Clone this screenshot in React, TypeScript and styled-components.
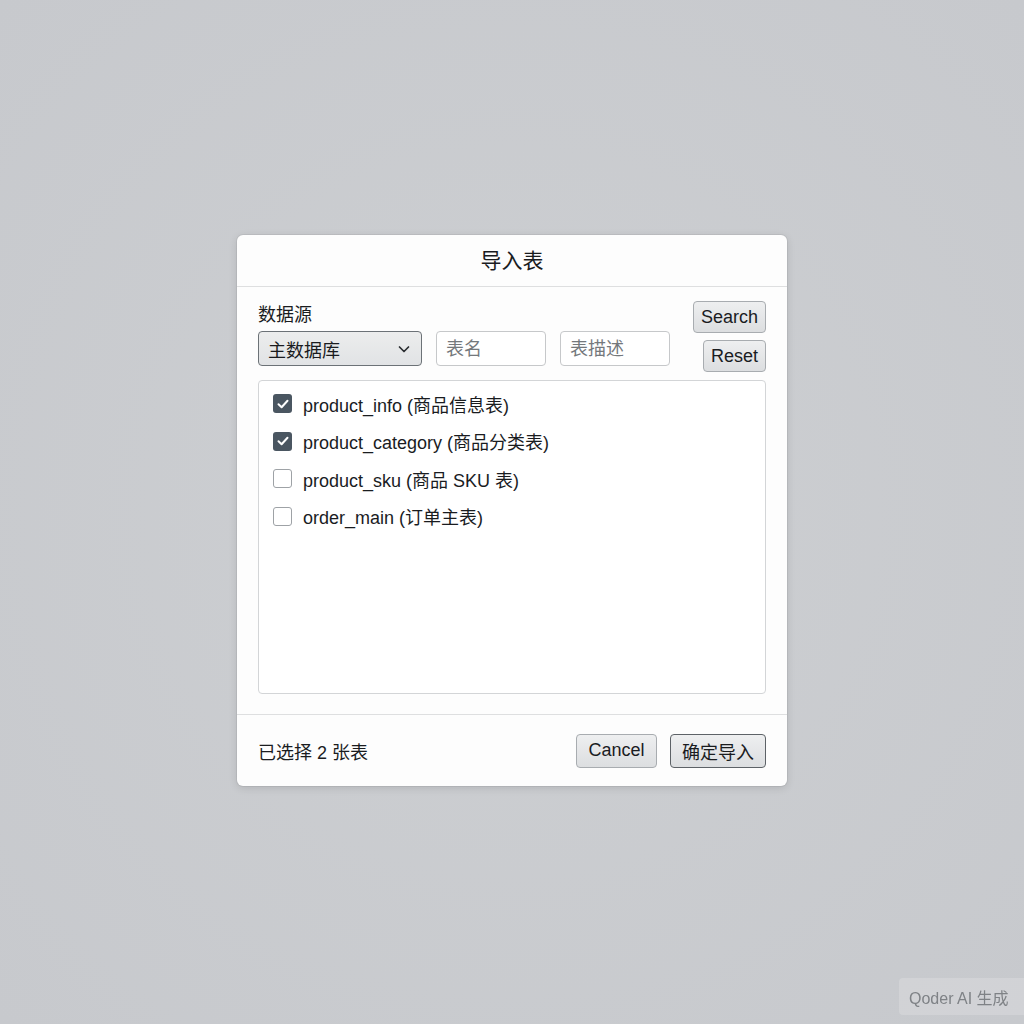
import React from "react";
import styled, { createGlobalStyle } from "styled-components";

const Global = createGlobalStyle`
  html, body { margin: 0; padding: 0; }
  body {
    background: #c9cbcf;
    font-family: "Liberation Sans", "Noto Sans CJK SC", sans-serif;
    color: #1a1c1f;
  }
`;

const Page = styled.div`
  width: 1024px;
  height: 1024px;
  display: flex;
  align-items: center;
  justify-content: center;
  background: radial-gradient(circle at 50% 50%, #cdcfd2 0%, #c7c9cd 100%);
`;

const Dialog = styled.div`
  width: 550px;
  height: 551px;
  margin-top: -3px;
  background: #fdfdfd;
  border-radius: 6px;
  box-shadow: 0 2px 8px rgba(0, 0, 0, 0.12), 0 0 0 1px rgba(0, 0, 0, 0.05);
  display: flex;
  flex-direction: column;
  overflow: hidden;
`;

const Header = styled.div`
  height: 52px;
  box-sizing: border-box;
  padding-bottom: 3px;
  border-bottom: 1px solid #dedfe0;
  display: flex;
  align-items: center;
  justify-content: center;
  font-size: 21px;
  color: #1a1c1f;
`;

const Body = styled.div`
  flex: 1;
  padding: 14px 21px 0;
  display: flex;
  flex-direction: column;
`;

const FilterRow = styled.div`
  display: flex;
  align-items: flex-end;
  gap: 14px;
`;

const Field = styled.div`
  display: flex;
  flex-direction: column;
`;

const Label = styled.div`
  font-size: 18px;
  line-height: 20px;
  margin-bottom: 6px;
`;

const Select = styled.div`
  width: 164px;
  height: 35px;
  box-sizing: border-box;
  border: 1px solid #6c7277;
  border-radius: 4px;
  background: linear-gradient(#eceded, #e1e3e5);
  display: flex;
  align-items: center;
  justify-content: space-between;
  padding: 0 10px 0 9px;
  font-size: 18px;
  color: #1a1c1f;
`;

const Input = styled.input`
  width: 110px;
  height: 35px;
  box-sizing: border-box;
  border: 1px solid #c6c8ca;
  border-radius: 4px;
  background: #fff;
  padding: 2px 9px 0;
  font-family: inherit;
  font-size: 18px;
  outline: none;
  &::placeholder { color: #74787c; }
`;

const ButtonColumn = styled.div`
  margin-left: auto;
  margin-bottom: -6px;
  display: flex;
  flex-direction: column;
  align-items: flex-end;
  gap: 7px;
`;

const Button = styled.button<{ $w: number; $h: number; $strong?: boolean }>`
  width: ${(p) => p.$w}px;
  height: ${(p) => p.$h}px;
  box-sizing: border-box;
  border: 1px solid ${(p) => (p.$strong ? "#5d6267" : "#a8acb0")};
  border-radius: 4px;
  background: linear-gradient(#eeeff0, #dcdee0);
  font-family: inherit;
  font-size: 18px;
  color: #1a1c1f;
  padding: 0;
  display: flex;
  align-items: center;
  justify-content: center;
`;

const ListBox = styled.div`
  margin-top: 14px;
  height: 314px;
  box-sizing: border-box;
  border: 1px solid #d3d5d7;
  border-radius: 4px;
  background: #fff;
  padding: 4px 14px;
  display: flex;
  flex-direction: column;
`;

const Row = styled.label`
  height: 37.5px;
  display: flex;
  align-items: center;
  gap: 11px;
  font-size: 18px;
  color: #1a1c1f;
`;

const Box = styled.span<{ $on: boolean }>`
  width: 19px;
  height: 19px;
  box-sizing: border-box;
  border-radius: 3px;
  border: ${(p) => (p.$on ? "none" : "1.5px solid #9ea2a6")};
  background: ${(p) => (p.$on ? "#4a5661" : "#fff")};
  display: flex;
  align-items: center;
  justify-content: center;
`;

const Footer = styled.div`
  height: 71px;
  border-top: 1px solid #dedfe0;
  display: flex;
  align-items: center;
  padding: 0 21px;
  font-size: 18px;
`;

const FooterButtons = styled.div`
  margin-left: auto;
  display: flex;
  gap: 13px;
`;

const Watermark = styled.div`
  position: fixed;
  right: 0;
  bottom: 9px;
  width: 125px;
  height: 37px;
  border-radius: 4px 0 0 4px;
  background: rgba(255, 255, 255, 0.18);
  display: flex;
  align-items: center;
  padding-left: 10px;
  box-sizing: border-box;
  font-size: 16px;
  color: #7f8286;
`;

const items = [
  { name: "product_info (商品信息表)", on: true },
  { name: "product_category (商品分类表)", on: true },
  { name: "product_sku (商品 SKU 表)", on: false },
  { name: "order_main (订单主表)", on: false },
];

export default function App() {
  return (
    <>
      <Global />
      <Page>
        <Dialog>
          <Header>导入表</Header>
          <Body>
            <FilterRow>
              <Field>
                <Label>数据源</Label>
                <Select>
                  <span>主数据库</span>
                  <svg width="14" height="14" viewBox="0 0 14 14">
                    <path d="M2.5 5 L7 9.5 L11.5 5" fill="none" stroke="#2a2d31" strokeWidth="1.7" strokeLinecap="round" strokeLinejoin="round" />
                  </svg>
                </Select>
              </Field>
              <Input placeholder="表名" />
              <Input placeholder="表描述" />
              <ButtonColumn>
                <Button $w={73} $h={32}>Search</Button>
                <Button $w={63} $h={32}>Reset</Button>
              </ButtonColumn>
            </FilterRow>
            <ListBox>
              {items.map((it) => (
                <Row key={it.name}>
                  <Box $on={it.on}>
                    {it.on && (
                      <svg width="14" height="14" viewBox="0 0 14 14">
                        <path d="M2.5 7.3 L5.6 10.2 L11.5 3.8" fill="none" stroke="#fff" strokeWidth="2" strokeLinecap="round" strokeLinejoin="round" />
                      </svg>
                    )}
                  </Box>
                  <span>{it.name}</span>
                </Row>
              ))}
            </ListBox>
          </Body>
          <Footer>
            <span>已选择 2 张表</span>
            <FooterButtons>
              <Button $w={81} $h={34}>Cancel</Button>
              <Button $w={96} $h={34} $strong>确定导入</Button>
            </FooterButtons>
          </Footer>
        </Dialog>
      </Page>
      <Watermark>Qoder AI 生成</Watermark>
    </>
  );
}
